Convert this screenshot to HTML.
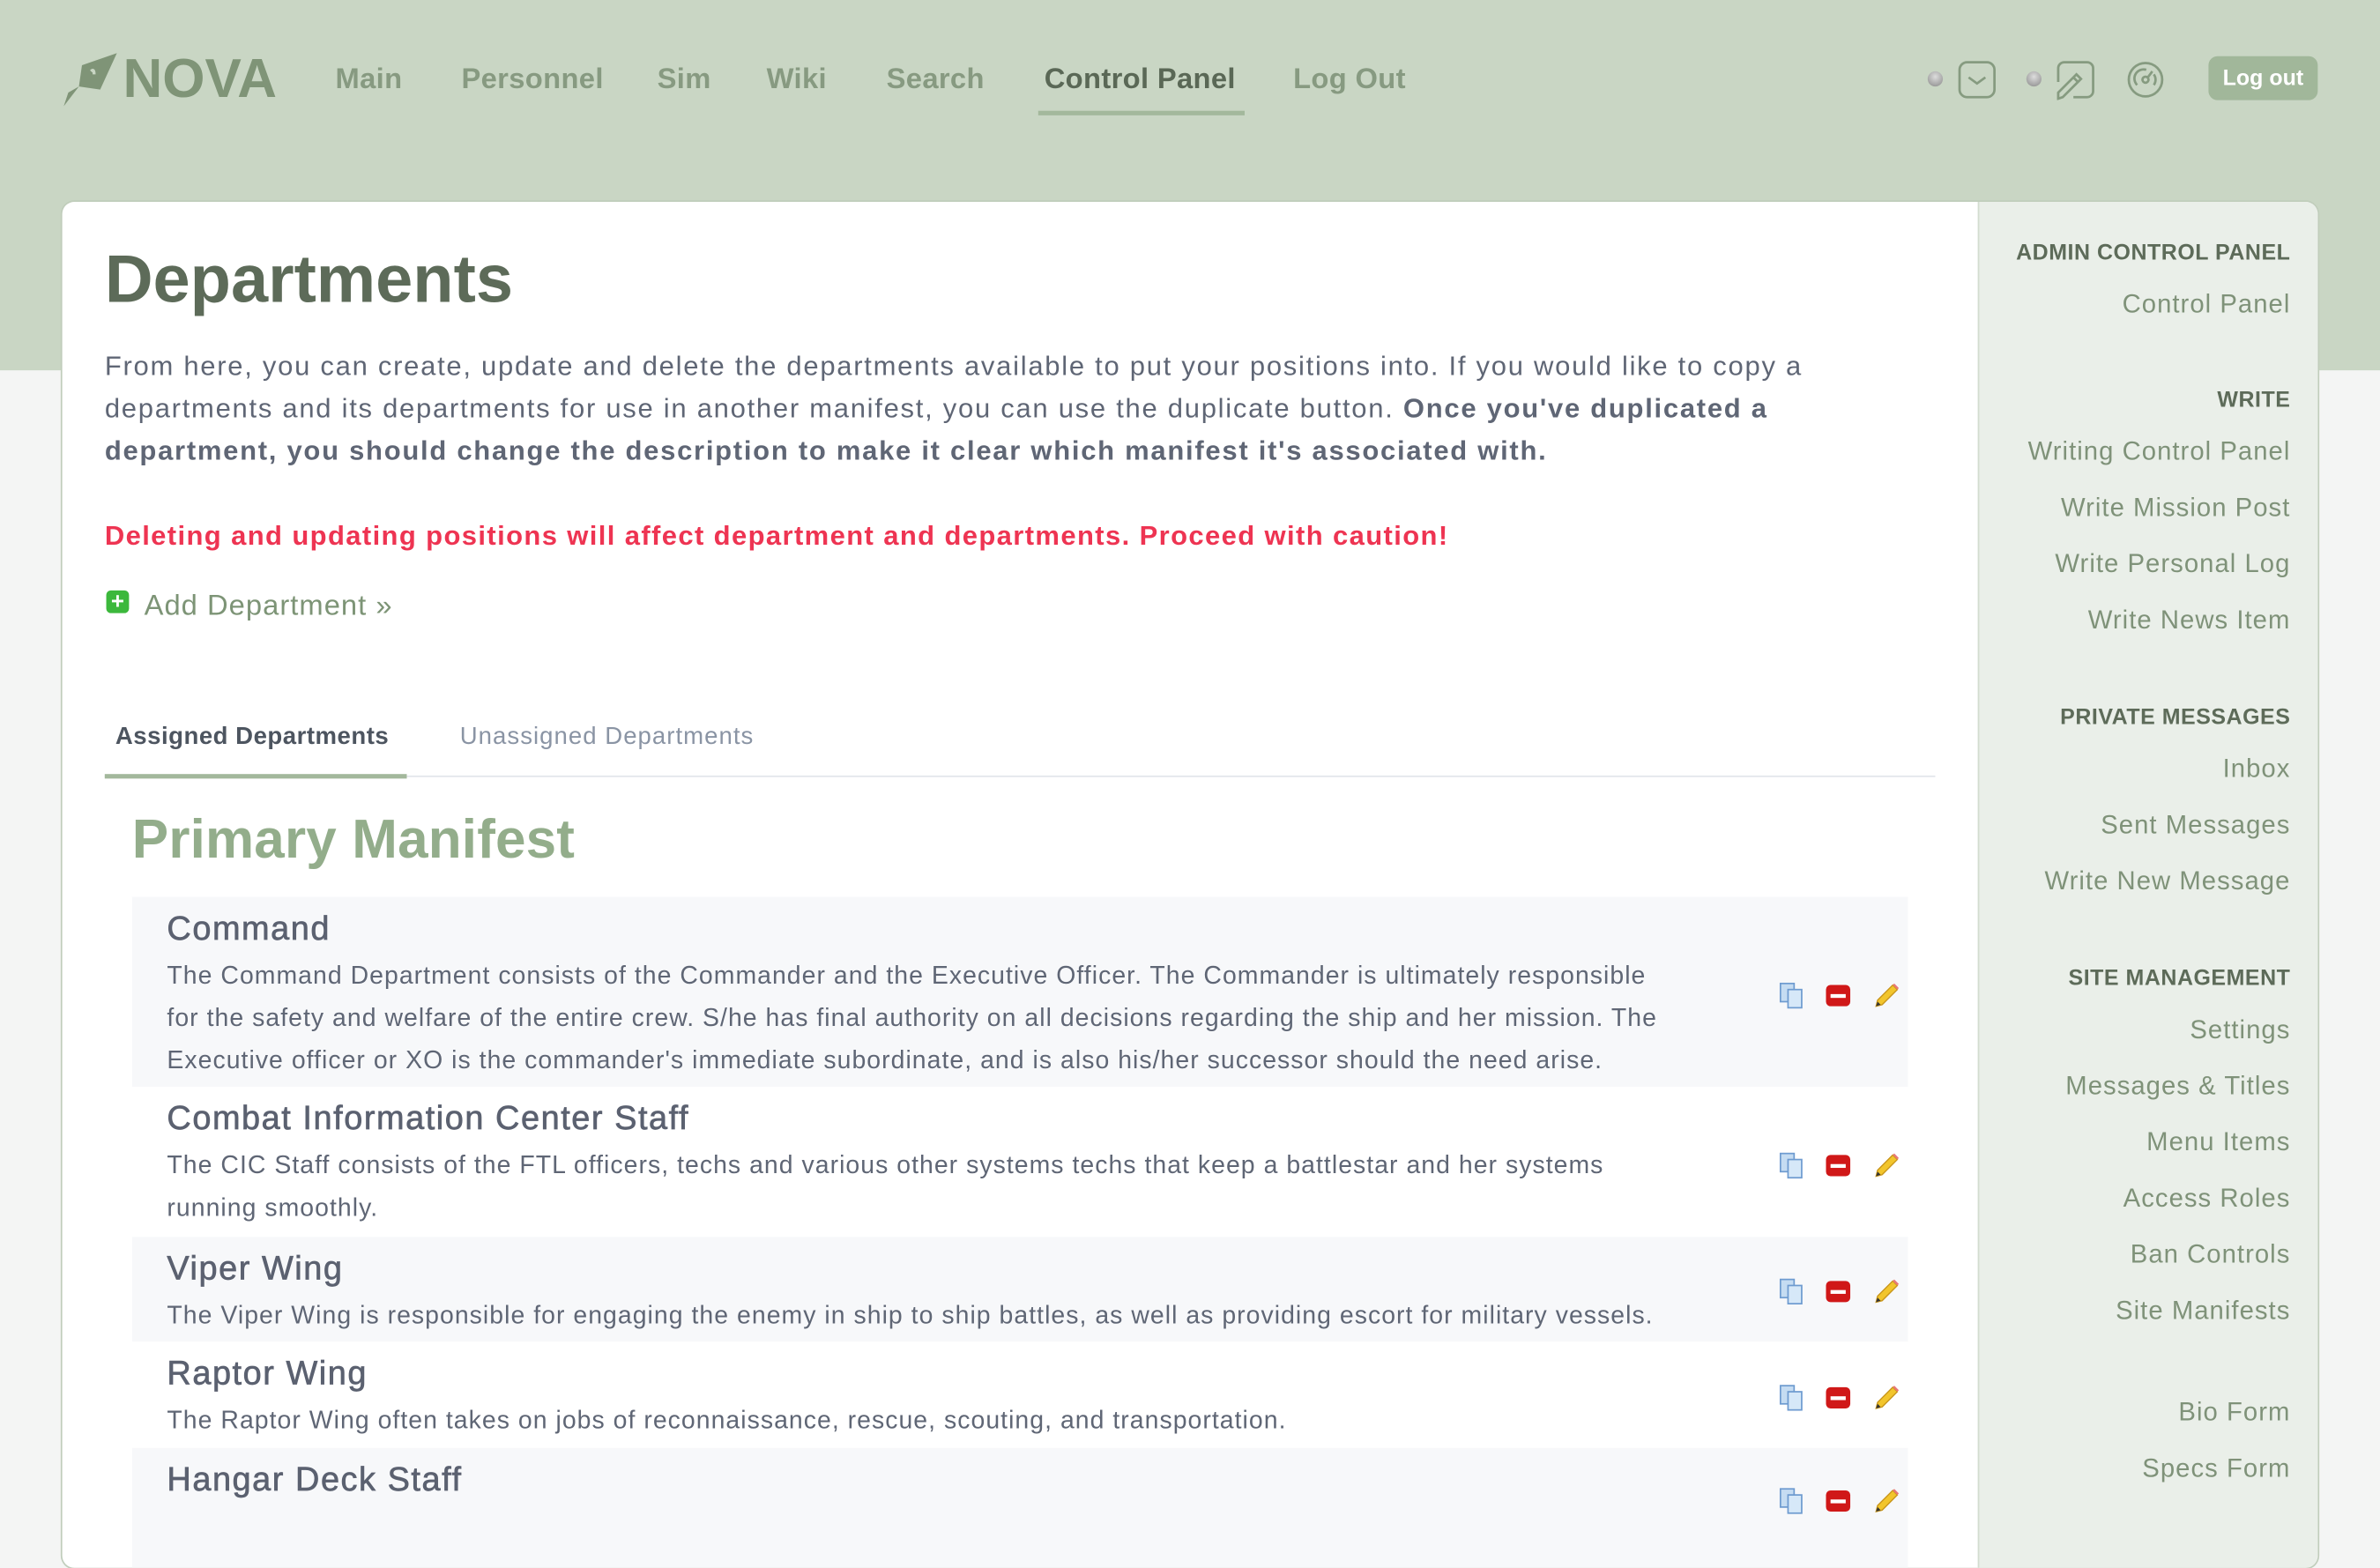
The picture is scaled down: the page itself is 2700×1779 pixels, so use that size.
<!DOCTYPE html>
<html><head><meta charset="utf-8"><style>
html,body{margin:0;padding:0;width:2700px;height:1700px;overflow:hidden;background:#f4f5f4;}
#s{position:absolute;left:0;top:0;width:1568px;height:987px;transform:scale(1.72194);transform-origin:0 0;font-family:"Liberation Sans",sans-serif;background:#f4f5f4;}
.hdr{position:absolute;left:0;top:0;width:1568px;height:244px;background:#c9d6c4;}
.nav{position:absolute;top:42px;font-size:19px;font-weight:bold;color:#879a81;white-space:nowrap;letter-spacing:0.2px}
.card{position:absolute;left:41px;top:133px;width:1486px;height:900px;background:#fff;border-radius:8px;box-shadow:0 0 0 1px #c0cdbb;overflow:hidden}
.side{position:absolute;left:1262px;top:0;width:224px;height:900px;background:#eaefe9;border-left:1px solid #d3ddd0}
.sh{position:absolute;right:19px;font-size:14.5px;font-weight:bold;color:#5d6b59;letter-spacing:0.3px;white-space:nowrap}
.sl{position:absolute;right:19px;font-size:17px;color:#7f9279;white-space:nowrap;letter-spacing:0.6px}
.t{position:absolute;white-space:nowrap}
.p{font-size:18px;color:#5f6675;line-height:28px;letter-spacing:1px}
.row{position:absolute;left:46px;width:1170px}
.row.g{background:#f7f8fa}
.rh{position:absolute;left:23px;font-size:22px;color:#5b6170;white-space:nowrap;letter-spacing:0.9px;-webkit-text-stroke:0.4px #5b6170}
.rd{position:absolute;left:23px;font-size:16.5px;color:#5f6675;line-height:28px;white-space:nowrap;letter-spacing:0.6px}
.ic{position:absolute;width:18px;height:18px}
</style></head><body><div id="s">
<div class="hdr"></div>
<svg style="position:absolute;left:40px;top:33px" width="40" height="38" viewBox="0 0 40 38"><path d="M14 10 L37 2 L26 26 L12 24 Z" fill="#7f9477"/><path d="M12 24 L2 37 L5 28 Z" fill="#7f9477"/><path d="M20 14 q2 -2 2 2" stroke="#c9d6c4" stroke-width="2" fill="none"/></svg>
<div class="t" style="left:81px;top:31px;font-size:36px;font-weight:bold;color:#7f9477;letter-spacing:0px">NOVA</div>
<div class="nav" style="left:221px">Main</div>
<div class="nav" style="left:304px">Personnel</div>
<div class="nav" style="left:433px">Sim</div>
<div class="nav" style="left:505px">Wiki</div>
<div class="nav" style="left:584px">Search</div>
<div class="nav" style="left:688px;color:#5a6856">Control Panel</div>
<div style="position:absolute;left:684px;top:73px;width:136px;height:3px;background:#a3b89c"></div>
<div class="nav" style="left:852px">Log Out</div>
<div style="position:absolute;left:1270px;top:47px;width:10px;height:10px;border-radius:50%;background:radial-gradient(circle at 50% 35%,#ddd,#888)"></div>
<svg style="position:absolute;left:1290px;top:40px" width="25" height="25" viewBox="0 0 25 25" fill="none" stroke="#869b80" stroke-width="1.6"><rect x="1" y="1" width="23" height="23" rx="5"/><path d="M7 11 l5.5 4 l5.5 -4"/></svg>
<div style="position:absolute;left:1335px;top:47px;width:10px;height:10px;border-radius:50%;background:radial-gradient(circle at 50% 35%,#ddd,#888)"></div>
<svg style="position:absolute;left:1355px;top:40px" width="25" height="26" viewBox="0 0 25 26" fill="none" stroke="#869b80" stroke-width="1.6"><path d="M1 14 V5 a4 4 0 0 1 4 -4 H20 a4 4 0 0 1 4 4 V20 a4 4 0 0 1 -4 4 H11"/><path d="M1 25 l0 -4 l10 -10 l3 3 l-10 10 z M11 11 l2 -2 l3 3 l-2 2"/></svg>
<svg style="position:absolute;left:1401px;top:40px" width="25" height="25" viewBox="0 0 25 25" fill="none" stroke="#869b80" stroke-width="1.6"><circle cx="12.5" cy="12.5" r="11"/><path d="M7 16 a6 6 0 0 1 6 -10 M18 9 a6 6 0 0 1 0 7"/><circle cx="12.5" cy="12.5" r="2"/><path d="M14 11 l3 -4"/></svg>
<div style="position:absolute;left:1455px;top:37px;width:72px;height:29px;border-radius:6px;background:#a1b79a;color:#fff;font-size:14.5px;font-weight:bold;text-align:center;line-height:31px">Log out</div>

<div class="card">
<div class="t" style="left:28px;top:27px;font-size:44px;font-weight:bold;color:#5d6b59;letter-spacing:0px">Departments</div>
<div class="t p" style="left:28px;top:94px">From here, you can create, update and delete the departments available to put your positions into. If you would like to copy a<br>departments and its departments for use in another manifest, you can use the duplicate button. <b>Once you've duplicated a</b><br><b>department, you should change the description to make it clear which manifest it's associated with.</b></div>
<div class="t" style="left:28px;top:210px;font-size:18px;font-weight:bold;color:#ee3452;letter-spacing:0.8px">Deleting and updating positions will affect department and departments. Proceed with caution!</div>
<div style="position:absolute;left:29px;top:256px;width:15px;height:15px;border-radius:3px;background:#3cb83c;color:#fff;font-size:15px;font-weight:bold;line-height:15px;text-align:center">+</div>
<div class="t" style="left:54px;top:256px;font-size:19px;color:#7d9476;letter-spacing:0.6px">Add Department »</div>
<div class="t" style="left:35px;top:344px;font-size:16px;font-weight:bold;color:#4d5560;letter-spacing:0.3px">Assigned Departments</div>
<div class="t" style="left:262px;top:344px;font-size:16px;color:#8a94a4;letter-spacing:0.6px">Unassigned Departments</div>
<div style="position:absolute;left:28px;top:378px;width:1206px;height:1px;background:#e2e5ea"></div>
<div style="position:absolute;left:28px;top:377px;width:199px;height:3px;background:#a3b89c"></div>
<div class="t" style="left:46px;top:399px;font-size:36px;font-weight:bold;color:#93ad8b;letter-spacing:0.1px">Primary Manifest</div>

<div class="row g" style="top:458px;height:125px"><div class="rh" style="top:8px">Command</div><div class="rd" style="top:38px">The Command Department consists of the Commander and the Executive Officer. The Commander is ultimately responsible<br>for the safety and welfare of the entire crew. S/he has final authority on all decisions regarding the ship and her mission. The<br>Executive officer or XO is the commander's immediate subordinate, and is also his/her successor should the need arise.</div></div>
<div class="row" style="top:583px;height:99px"><div class="rh" style="top:8px">Combat Information Center Staff</div><div class="rd" style="top:38px">The CIC Staff consists of the FTL officers, techs and various other systems techs that keep a battlestar and her systems<br>running smoothly.</div></div>
<div class="row g" style="top:682px;height:69px"><div class="rh" style="top:8px">Viper Wing</div><div class="rd" style="top:38px">The Viper Wing is responsible for engaging the enemy in ship to ship battles, as well as providing escort for military vessels.</div></div>
<div class="row" style="top:751px;height:70px"><div class="rh" style="top:8px">Raptor Wing</div><div class="rd" style="top:38px">The Raptor Wing often takes on jobs of reconnaissance, rescue, scouting, and transportation.</div></div>
<div class="row g" style="top:821px;height:80px"><div class="rh" style="top:8px">Hangar Deck Staff</div></div>

<div class="side">
<div class="sh" style="top:26px">ADMIN CONTROL PANEL</div>
<div class="sl" style="top:58px">Control Panel</div>
<div class="sh" style="top:123px">WRITE</div>
<div class="sl" style="top:155px">Writing Control Panel</div>
<div class="sl" style="top:192px">Write Mission Post</div>
<div class="sl" style="top:229px">Write Personal Log</div>
<div class="sl" style="top:266px">Write News Item</div>
<div class="sh" style="top:332px">PRIVATE MESSAGES</div>
<div class="sl" style="top:364px">Inbox</div>
<div class="sl" style="top:401px">Sent Messages</div>
<div class="sl" style="top:438px">Write New Message</div>
<div class="sh" style="top:504px">SITE MANAGEMENT</div>
<div class="sl" style="top:536px">Settings</div>
<div class="sl" style="top:573px">Messages &amp; Titles</div>
<div class="sl" style="top:610px">Menu Items</div>
<div class="sl" style="top:647px">Access Roles</div>
<div class="sl" style="top:684px">Ban Controls</div>
<div class="sl" style="top:721px">Site Manifests</div>
<div class="sl" style="top:788px">Bio Form</div>
<div class="sl" style="top:825px">Specs Form</div>
</div>
</div>

<svg width="0" height="0" style="position:absolute"><defs>
<g id="cp"><rect x="2" y="1" width="9" height="12" fill="#c5dcf2" stroke="#6e9bd0" stroke-width="1"/><rect x="7" y="5" width="9" height="12" fill="#d6e8f8" stroke="#6e9bd0" stroke-width="1"/></g>
<g id="dl"><rect x="1" y="2" width="16" height="14" rx="3" fill="#d01818"/><rect x="4" y="8" width="10" height="2.5" fill="#fff"/></g>
<g id="pn"><path d="M3 16 l1 -4 l10 -10 l3 3 l-10 10 z" fill="#f2c52c" stroke="#c8951a" stroke-width="0.8"/><path d="M14 2 l3 3 l1 -1 l-3 -3 z" fill="#e87878"/><path d="M3 16 l1 -3 l2 2 z" fill="#333"/></g>
</defs></svg>
<svg class="ic" style="left:1171px;top:647px" viewBox="0 0 18 18"><use href="#cp"/></svg>
<svg class="ic" style="left:1202px;top:647px" viewBox="0 0 18 18"><use href="#dl"/></svg>
<svg class="ic" style="left:1233px;top:647px" viewBox="0 0 18 18"><use href="#pn"/></svg>
<svg class="ic" style="left:1171px;top:759px" viewBox="0 0 18 18"><use href="#cp"/></svg>
<svg class="ic" style="left:1202px;top:759px" viewBox="0 0 18 18"><use href="#dl"/></svg>
<svg class="ic" style="left:1233px;top:759px" viewBox="0 0 18 18"><use href="#pn"/></svg>
<svg class="ic" style="left:1171px;top:842px" viewBox="0 0 18 18"><use href="#cp"/></svg>
<svg class="ic" style="left:1202px;top:842px" viewBox="0 0 18 18"><use href="#dl"/></svg>
<svg class="ic" style="left:1233px;top:842px" viewBox="0 0 18 18"><use href="#pn"/></svg>
<svg class="ic" style="left:1171px;top:912px" viewBox="0 0 18 18"><use href="#cp"/></svg>
<svg class="ic" style="left:1202px;top:912px" viewBox="0 0 18 18"><use href="#dl"/></svg>
<svg class="ic" style="left:1233px;top:912px" viewBox="0 0 18 18"><use href="#pn"/></svg>
<svg class="ic" style="left:1171px;top:980px" viewBox="0 0 18 18"><use href="#cp"/></svg>
<svg class="ic" style="left:1202px;top:980px" viewBox="0 0 18 18"><use href="#dl"/></svg>
<svg class="ic" style="left:1233px;top:980px" viewBox="0 0 18 18"><use href="#pn"/></svg>
</div></body></html>
